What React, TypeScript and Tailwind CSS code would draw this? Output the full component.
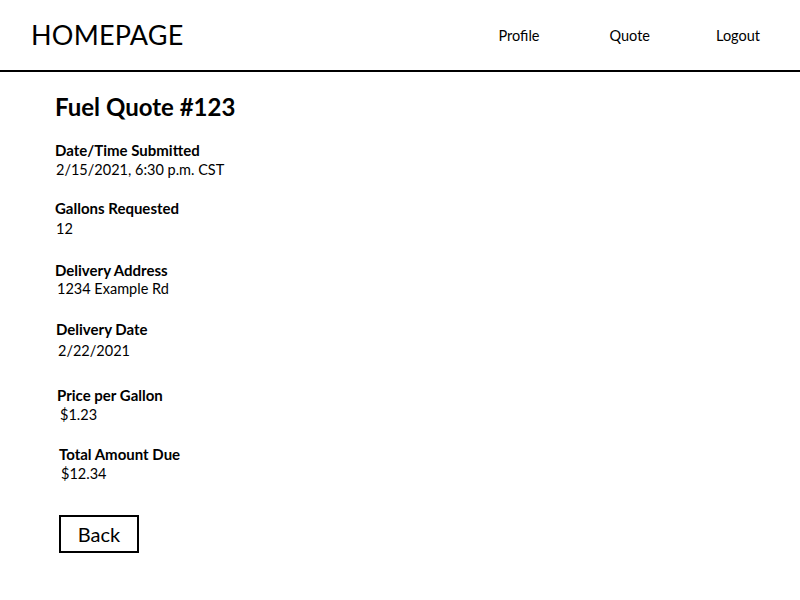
import React from "react";

type fieldType = {
  label: string;
  value: string;
  top: string;
  labelIndent: string;
  valueIndent: string;
  gap: string;
};

const fields: fieldType[] = [
  { label: "Date/Time Submitted", value: "2/15/2021, 6:30 p.m. CST", top: "mt-[18px]", labelIndent: "ml-0", valueIndent: "ml-px", gap: "mt-0" },
  { label: "Gallons Requested", value: "12", top: "mt-[18px]", labelIndent: "ml-0", valueIndent: "ml-px", gap: "mt-px" },
  { label: "Delivery Address", value: "1234 Example Rd", top: "mt-[21px]", labelIndent: "ml-0", valueIndent: "ml-[2px]", gap: "-mt-px" },
  { label: "Delivery Date", value: "2/22/2021", top: "mt-[20px]", labelIndent: "ml-px", valueIndent: "ml-[3px]", gap: "mt-[2px]" },
  { label: "Price per Gallon", value: "$1.23", top: "mt-[24px]", labelIndent: "ml-[2px]", valueIndent: "ml-[5px]", gap: "mt-0" },
  { label: "Total Amount Due", value: "$12.34", top: "mt-[19px]", labelIndent: "ml-[4px]", valueIndent: "ml-[6px]", gap: "mt-0" },
];

function Header() {
  return (
    <div className="flex h-[72px] items-center border-b-2 border-black pb-[2px] pl-[31px]">
      <h1 className="text-[27px] leading-none tracking-[0.2px] text-black">HOMEPAGE</h1>
      <nav className="ml-auto flex items-center pr-[40px] pt-[4px] text-[14.5px] text-black">
        <span>Profile</span>
        <span className="ml-[70px]">Quote</span>
        <span className="ml-[66px]">Logout</span>
      </nav>
    </div>
  );
}

function App() {
  return (
    <div className="h-[600px] w-[800px] bg-white font-['Lato',sans-serif] text-black">
      <Header />
      <main className="flex flex-col pl-[55px] pt-[20px]">
        <h2 className="text-[24px] font-bold leading-[30px]">Fuel Quote #123</h2>
        {fields.map((f) => (
          <div key={f.label} className={"flex flex-col " + f.top}>
            <span className={"text-[15px] font-bold leading-[20px] " + f.labelIndent}>{f.label}</span>
            <span className={"text-[14.5px] leading-[20px] " + f.valueIndent + " " + f.gap}>{f.value}</span>
          </div>
        ))}
        <button
          type="button"
          className="ml-[4px] mt-[31px] flex h-[38px] w-[80px] items-center justify-center border-2 border-black text-[20px]"
        >
          Back
        </button>
      </main>
    </div>
  );
}

export default App;
